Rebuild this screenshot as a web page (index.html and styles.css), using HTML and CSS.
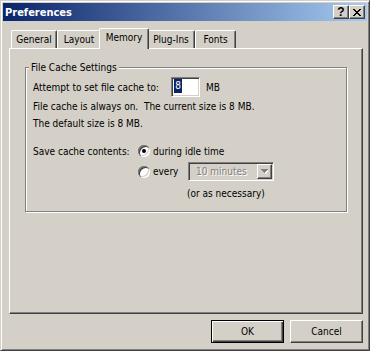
FILE: index.html
```html
<!DOCTYPE html>
<html lang="en">
  <head>
    <meta charset="utf-8">
    <title>Preferences</title>
    <link rel="stylesheet" href="styles.css">
  </head>
  <body>
    <div class="window">
      <div class="titlebar">
        <span class="title">Preferences</span>
        <span class="tbtn help">?</span>
        <span class="tbtn close">
          <svg width="8" height="7" viewBox="0 0 8 7" shape-rendering="crispEdges"><path d="M0 0h2v1H0zM6 0h2v1H6zM1 1h2v1H1zM5 1h2v1H5zM2 2h4v1H2zM3 3h2v1H3zM2 4h4v1H2zM1 5h2v1H1zM5 5h2v1H5zM0 6h2v1H0zM6 6h2v1H6z" fill="#000"/></svg>
        </span>
      </div>
      <div class="client">
        <div class="tabs">
          <div class="tab t-general">General</div>
          <div class="tab t-layout">Layout</div>
          <div class="tab t-memory active">Memory</div>
          <div class="tab t-plugins">Plug-Ins</div>
          <div class="tab t-fonts">Fonts</div>
        </div>
        <div class="panel">
          <fieldset class="group">
            <legend>File Cache Settings</legend>
            <div class="row r-size">
              <span class="lbl">Attempt to set file cache to:</span>
              <span class="edit"><span class="sel">8</span></span>
              <span class="unit">MB</span>
            </div>
            <div class="row r-info">File cache is always on.&nbsp; The current size is 8 MB.</div>
            <div class="row r-default">The default size is 8 MB.</div>
            <div class="row r-save">
              <span class="save-lbl">Save cache contents:</span>
              <span class="radio on"></span>
              <span>during idle time</span>
            </div>
            <div class="row r-every">
              <span class="radio"></span>
              <span class="every">every</span>
              <span class="combo">
                <span class="combo-text">10 minutes</span>
                <span class="drop">
                  <svg width="7" height="5" viewBox="0 0 7 5" shape-rendering="crispEdges"><path d="M1 1h7v1H1zM2 2h5v1H2zM3 3h3v1H3zM4 4h1v1H4z" fill="#fff"/><path d="M0 0h7v1H0zM1 1h5v1H1zM2 2h3v1H2zM3 3h1v1H3z" fill="#808080"/></svg>
                </span>
              </span>
            </div>
            <div class="row r-note">(or as necessary)</div>
          </fieldset>
        </div>
        <div class="buttons">
          <span class="btn default">OK</span>
          <span class="btn">Cancel</span>
        </div>
      </div>
    </div>
  </body>
</html>
```

FILE: styles.css
```css
body {
    margin: 0;
    background: #d4d0c8;
    font-family: "DejaVu Sans", "Liberation Sans", sans-serif;
    font-stretch: condensed;
    font-size: 10px;
    color: #000;
}

.window {
    box-sizing: border-box;
    width: 370px;
    height: 351px;
    border: 1px solid;
    border-color: #d4d0c8 #404040 #404040 #d4d0c8;
    box-shadow: inset 1px 1px #fff, inset -1px -1px #808080;
    padding: 2px;
    display: flex;
    flex-direction: column;
    white-space: nowrap;
}

.titlebar {
    height: 18px;
    background: linear-gradient(to right, #0a246a, #a6caf0);
    display: flex;
    align-items: center;
    padding: 0 2px;
}

.title {
    flex: 1;
    color: #fff;
    font-weight: bold;
    font-size: 11px;
}

.tbtn {
    box-sizing: border-box;
    width: 16px;
    height: 14px;
    background: #d4d0c8;
    border: 1px solid;
    border-color: #fff #404040 #404040 #fff;
    box-shadow: inset -1px -1px #808080;
    display: flex;
    align-items: center;
    justify-content: center;
    font-family: "Liberation Sans", sans-serif;
    font-weight: bold;
    font-size: 12px;
    line-height: 12px;
}

.client {
    flex: 1;
    padding: 7px 4px 0 6px;
    display: flex;
    flex-direction: column;
}

/* tabs */
.tabs {
    display: flex;
    align-items: flex-end;
    height: 20px;
    padding-left: 2px;
}

.tab {
    box-sizing: border-box;
    height: 18px;
    padding-top: 1px;
    border: 1px solid;
    border-color: #fff #404040 transparent #fff;
    border-bottom: none;
    border-radius: 2px 2px 0 0;
    box-shadow: inset -1px 0 #808080;
    background: #d4d0c8;
    text-align: center;
    line-height: 16px;
}

.tab.active {
    height: 21px;
    margin: 0 -2px -1px;
    position: relative;
    z-index: 1;
}

.t-general { width: 46px; }
.t-layout { width: 44px; }
.t-memory { width: 50px; }
.t-plugins { width: 48px; }
.t-fonts { width: 41px; }

.panel {
    box-sizing: border-box;
    height: 266px;
    border: 1px solid;
    border-color: #fff #404040 #404040 #fff;
    box-shadow: inset -1px -1px #808080;
    padding: 12px 15px 0;
}

/* group box */
.group {
    margin: 0;
    min-width: 0;
    padding: 0 0 9px 7px;
    border: 1px solid #808080;
    box-shadow: 1px 1px #fff, inset 1px 1px #fff;
}

.group legend {
    margin-left: -4px;
    padding: 0 2px;
    line-height: 13px;
    background: #d4d0c8;
}

.row {
    display: flex;
    align-items: center;
}

.row > span {
    flex-shrink: 0;
}

.r-size { margin-top: 3px; height: 20px; }
.r-info { height: 18px; }
.r-default { height: 17px; }
.r-save { margin-top: 9px; height: 20px; }
.r-every { margin-top: 1px; height: 19px; padding-left: 105px; }
.r-note { margin-top: 3px; height: 18px; padding-left: 154px; }

.lbl { width: 138px; }
.save-lbl { width: 105px; }
.every { width: 35px; }
.unit { margin-left: 6px; }

.edit {
    box-sizing: border-box;
    width: 29px;
    height: 20px;
    border: 1px solid;
    border-color: #808080 #fff #fff #808080;
    box-shadow: inset 1px 1px #404040, inset -1px -1px #d4d0c8;
    background: #fff;
    display: flex;
    align-items: flex-start;
    padding: 1px 0 0 2px;
}

.sel {
    width: 8px;
    height: 14px;
    line-height: 14px;
    text-align: center;
    background: #0a246a;
    color: #fff;
}

.radio {
    box-sizing: border-box;
    width: 12px;
    height: 12px;
    margin-right: 3px;
    border-radius: 50%;
    background: #fff;
    box-shadow: inset 1px 1px #808080, inset 2px 2px #404040, inset -1px -1px #fff, inset -2px -2px #d4d0c8;
    position: relative;
}

.radio.on::after {
    content: "";
    position: absolute;
    left: 4px;
    top: 4px;
    width: 4px;
    height: 4px;
    border-radius: 50%;
    background: #000;
}

.combo {
    box-sizing: border-box;
    width: 86px;
    height: 19px;
    border: 1px solid;
    border-color: #808080 #fff #fff #808080;
    box-shadow: inset 1px 1px #404040, inset -1px -1px #d4d0c8;
    display: flex;
    align-items: center;
    padding: 0 1px 0 7px;
    color: #808080;
    text-shadow: 1px 1px #fff;
}

.drop {
    box-sizing: border-box;
    margin-left: auto;
    width: 15px;
    height: 15px;
    border: 1px solid;
    border-color: #fff #404040 #404040 #fff;
    box-shadow: inset -1px -1px #808080;
    display: flex;
    align-items: center;
    justify-content: center;
}

/* dialog buttons */
.buttons {
    display: flex;
    justify-content: flex-end;
    gap: 6px;
    margin-top: 6px;
}

.btn {
    box-sizing: border-box;
    width: 73px;
    height: 23px;
    border: 1px solid;
    border-color: #fff #404040 #404040 #fff;
    box-shadow: inset -1px -1px #808080;
    display: flex;
    align-items: center;
    justify-content: center;
}

.btn.default {
    border-color: #000;
    box-shadow: inset 1px 1px #fff, inset -1px -1px #404040, inset -2px -2px #808080;
}
```
